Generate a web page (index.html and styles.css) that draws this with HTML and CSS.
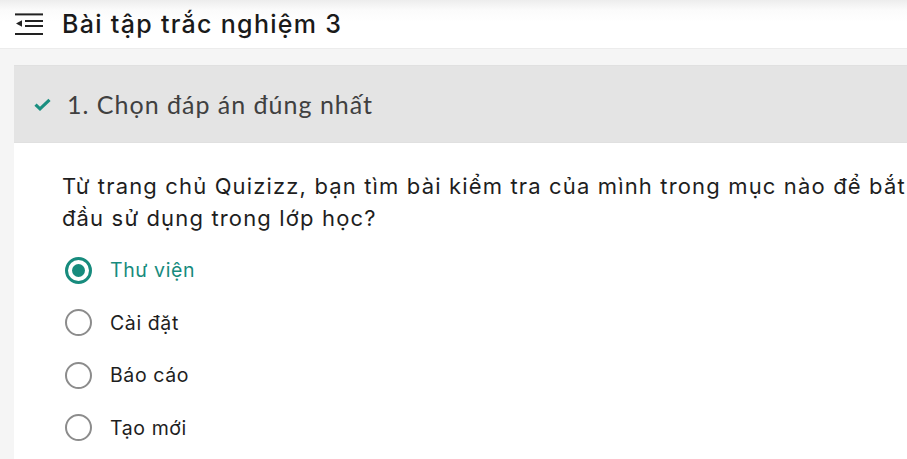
FILE: index.html
```html
<!DOCTYPE html>
<html lang="vi">
<head>
<meta charset="utf-8">
<link rel="stylesheet" href="styles.css">
</head>
<body>
<header class="topbar">
  <svg class="menu-icon" width="30" height="24" viewBox="0 0 30 24">
    <rect x="0" y="0.4" width="28" height="2" fill="#222"/>
    <rect x="10" y="7" width="18" height="2" fill="#222"/>
    <rect x="10" y="12" width="18" height="2" fill="#222"/>
    <rect x="0" y="20" width="28" height="2" fill="#222"/>
    <polygon points="1,10.5 7,7.3 7,13.7" fill="#222"/>
  </svg>
  <h1 class="title">Bài tập trắc nghiệm 3</h1>
</header>
<div class="page">
  <section class="card">
    <div class="card-head">
      <svg class="check" width="17" height="13" viewBox="0 0 17 13">
        <path d="M1.5 6.6 L6 10.8 L15.5 1.8" fill="none" stroke="#1a8f80" stroke-width="3.2" stroke-linejoin="miter"/>
      </svg>
      <span class="card-title">1. Chọn đáp án đúng nhất</span>
    </div>
    <div class="card-body">
      <p class="question">Từ trang chủ Quizizz, bạn tìm bài kiểm tra của mình trong mục nào để bắt đầu sử dụng trong lớp học?</p>
      <ul class="options">
        <li class="option selected"><span class="radio"></span><span class="label">Thư viện</span></li>
        <li class="option"><span class="radio"></span><span class="label">Cài đặt</span></li>
        <li class="option"><span class="radio"></span><span class="label">Báo cáo</span></li>
        <li class="option"><span class="radio"></span><span class="label">Tạo mới</span></li>
      </ul>
    </div>
  </section>
</div>
</body>
</html>
```
FILE: styles.css
```css
* { box-sizing: border-box; }
html, body { margin: 0; padding: 0; }
body {
  width: 907px;
  height: 459px;
  overflow: hidden;
  background: #f5f5f5;
  font-family: "Inter", "Noto Sans", sans-serif;
  color: #222;
}
.topbar {
  height: 49px;
  display: flex;
  align-items: center;
  padding-left: 15px;
  background: linear-gradient(#ededed 0px, #fbfbfb 10px, #ffffff 22px);
  border-bottom: 1px solid #ececec;
}
.menu-icon { flex: none; margin-top: 1px; }
.title {
  margin: 0 0 0 17px;
  font-family: "Inter", "Noto Sans", sans-serif;
  font-size: 25px;
  font-weight: 500;
  color: #1a1a1a;
  letter-spacing: 1.3px;
}
.page {
  padding: 16px 0 0 14px;
}
.card {
  background: #fff;
  height: 400px;
  width: 893px;
  overflow: hidden;
}
.card-head {
  height: 78px;
  background: #e4e4e4;
  border-top: 1px solid #e0e0e0;
  border-bottom: 1px solid #e0e0e0;
  display: flex;
  align-items: center;
  padding-left: 20px;
}
.check { flex: none; margin-top: 1px; }
.card-title {
  margin-left: 16px;
  font-family: "Lato", sans-serif;
  font-size: 25px;
  letter-spacing: 1px;
  color: #404040;
}
.card-body {
  padding: 27px 0 0 48px;
}
.question {
  margin: 0;
  width: 870px;
  font-size: 22px;
  line-height: 32px;
  letter-spacing: 1.15px;
  color: #1e1e1e;
}
.options {
  list-style: none;
  margin: 10px 0 0 0;
  padding: 0;
}
.option {
  height: 52.5px;
  display: flex;
  align-items: center;
  padding-left: 3px;
}
.radio {
  width: 27px;
  height: 27px;
  border: 2.5px solid #8c8c8c;
  border-radius: 50%;
  flex: none;
  display: flex;
  align-items: center;
  justify-content: center;
}
.selected .radio {
  border: 3px solid #178b7d;
}
.selected .radio::after {
  content: "";
  width: 13px;
  height: 13px;
  border-radius: 50%;
  background: #178b7d;
}
.label {
  margin-left: 18px;
  font-size: 19.5px;
  letter-spacing: 0.6px;
  color: #1e1e1e;
}
.selected .label { color: #178b7d; }
```
